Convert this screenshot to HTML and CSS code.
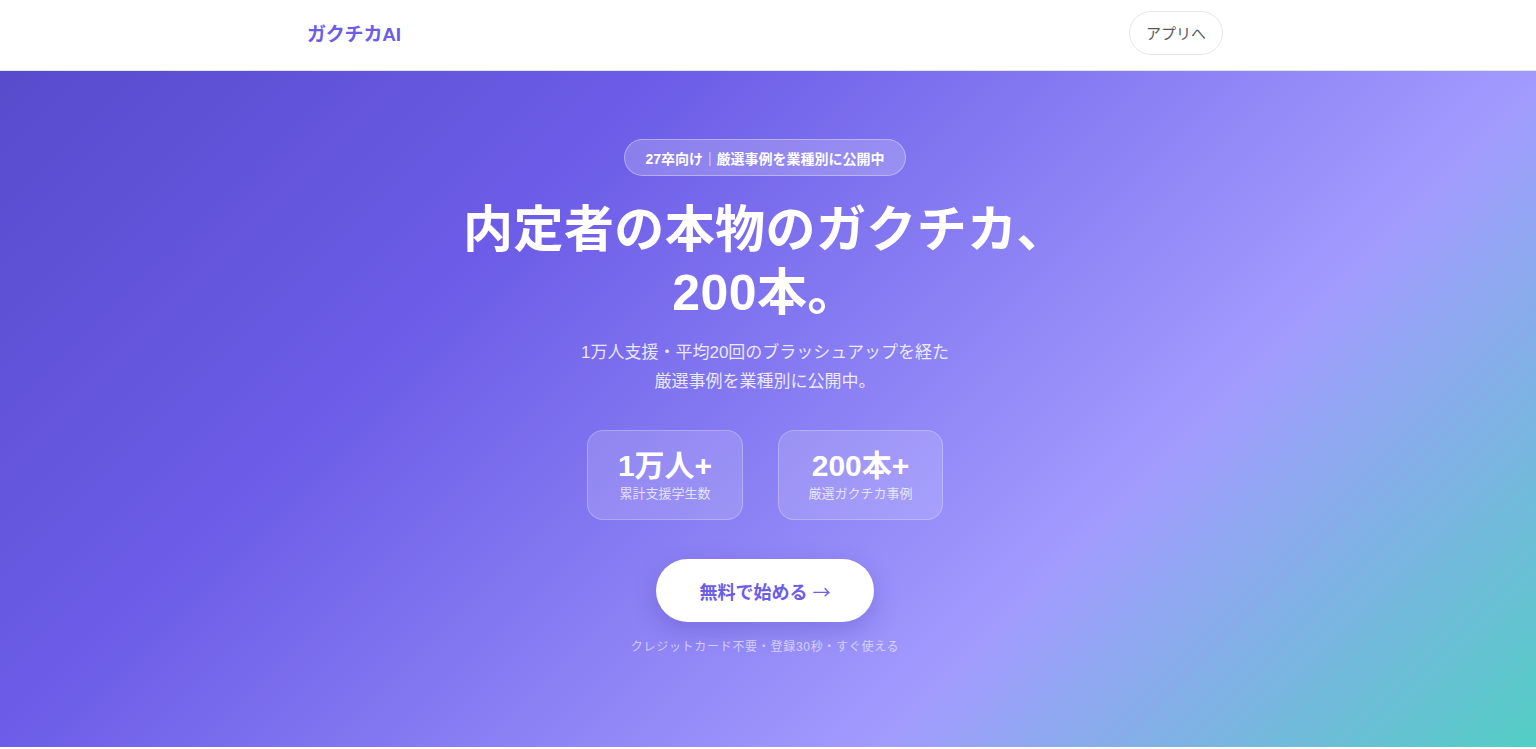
FILE: index.html
```html
<!DOCTYPE html>
<html lang="ja">
<head>
<meta charset="utf-8">
<title>ガクチカAI</title>
<link rel="stylesheet" href="styles.css">
</head>
<body>
<header class="site-header">
  <div class="header-inner">
    <div class="logo">ガクチカAI</div>
    <a class="app-btn" href="#">アプリへ</a>
  </div>
</header>
<section class="hero">
  <div class="badge">27卒向け<span class="sep">|</span>厳選事例を業種別に公開中</div>
  <h1 class="title">内定者の本物のガクチカ、<br>200本。</h1>
  <p class="lead">1万人支援・平均20回のブラッシュアップを経た<br>厳選事例を業種別に公開中。</p>
  <div class="stats">
    <div class="stat stat-a">
      <div class="stat-num">1万人+</div>
      <div class="stat-label">累計支援学生数</div>
    </div>
    <div class="stat stat-b">
      <div class="stat-num">200本+</div>
      <div class="stat-label">厳選ガクチカ事例</div>
    </div>
  </div>
  <a class="cta" href="#">無料で始める <span class="arrow">→</span></a>
  <p class="note">クレジットカード不要・登録30秒・すぐ使える</p>
</section>
</body>
</html>
```
FILE: styles.css
```css
* { box-sizing: border-box; }
html, body { margin: 0; padding: 0; }
body {
  font-family: "Liberation Sans", "Noto Sans CJK JP", sans-serif;
  background: #ffffff;
  color: #333;
}
a { text-decoration: none; }
.site-header {
  height: 71px;
  background: #fff;
  border-bottom: 1px solid #e4e4ee;
  padding-right: 6px;
}
.header-inner {
  max-width: 960px;
  margin: 0 auto;
  padding: 0 22px;
  height: 65px;
  display: flex;
  align-items: center;
  justify-content: space-between;
}
.logo {
  font-size: 19px;
  font-weight: 700;
  color: #6c5ce7;
  letter-spacing: -0.2px;
}
.app-btn {
  display: inline-flex;
  align-items: center;
  height: 44px;
  padding: 0 16px;
  border: 1.5px solid #e6e6f0;
  border-radius: 22px;
  font-size: 15px;
  color: #555566;
  background: #fff;
}
.hero {
  height: 676px;
  background: linear-gradient(135deg, #584bcc 0%, #6c5ce7 30%, #a29bfe 70%, #52cec4 100%);
  display: flex;
  flex-direction: column;
  align-items: center;
  padding-top: 68px;
  padding-right: 6px;
  color: #fff;
  text-align: center;
}
.badge {
  height: 37px;
  display: inline-flex;
  align-items: center;
  padding: 0 20px;
  border-radius: 19px;
  background: rgba(255,255,255,0.2);
  border: 1px solid rgba(255,255,255,0.35);
  font-size: 14px;
  font-weight: 700;
  color: #fff;
}
.sep {
  font-weight: 400;
  color: rgba(255,255,255,0.55);
  margin: 0 5px;
}
.title {
  margin: 23px 0 0;
  font-size: 50px;
  line-height: 63px;
  font-weight: 700;
  letter-spacing: 0.4px;
}
.lead {
  margin: 13px 0 0;
  font-size: 17px;
  line-height: 29px;
  color: rgba(255,255,255,0.85);
}
.stats {
  margin-top: 34px;
  display: flex;
  gap: 35px;
}
.stat {
  height: 90px;
  border-radius: 16px;
  background: rgba(255,255,255,0.15);
  border: 1px solid rgba(255,255,255,0.25);
  display: flex;
  flex-direction: column;
  align-items: center;
  justify-content: center;
  padding-top: 1px;
}
.stat-a { width: 156px; }
.stat-b { width: 165px; }
.stat-num {
  font-size: 30px;
  font-weight: 700;
  line-height: 34px;
}
.stat-label {
  font-size: 13px;
  line-height: 18px;
  color: rgba(255,255,255,0.75);
  margin-top: 2px;
}
.cta {
  margin-top: 39px;
  width: 218px;
  height: 63px;
  border-radius: 32px;
  background: #fff;
  color: #6c5ce7;
  font-size: 18px;
  font-weight: 700;
  display: flex;
  align-items: center;
  justify-content: center;
  box-shadow: 0 8px 24px rgba(60,40,160,0.25);
}
.arrow {
  font-family: "Noto Sans CJK JP", sans-serif;
  font-weight: 400;
  margin-left: 5px;
}
.note {
  margin: 16px 0 0;
  font-size: 12px;
  line-height: 18px;
  color: rgba(255,255,255,0.6);
  letter-spacing: 0.7px;
}
```
